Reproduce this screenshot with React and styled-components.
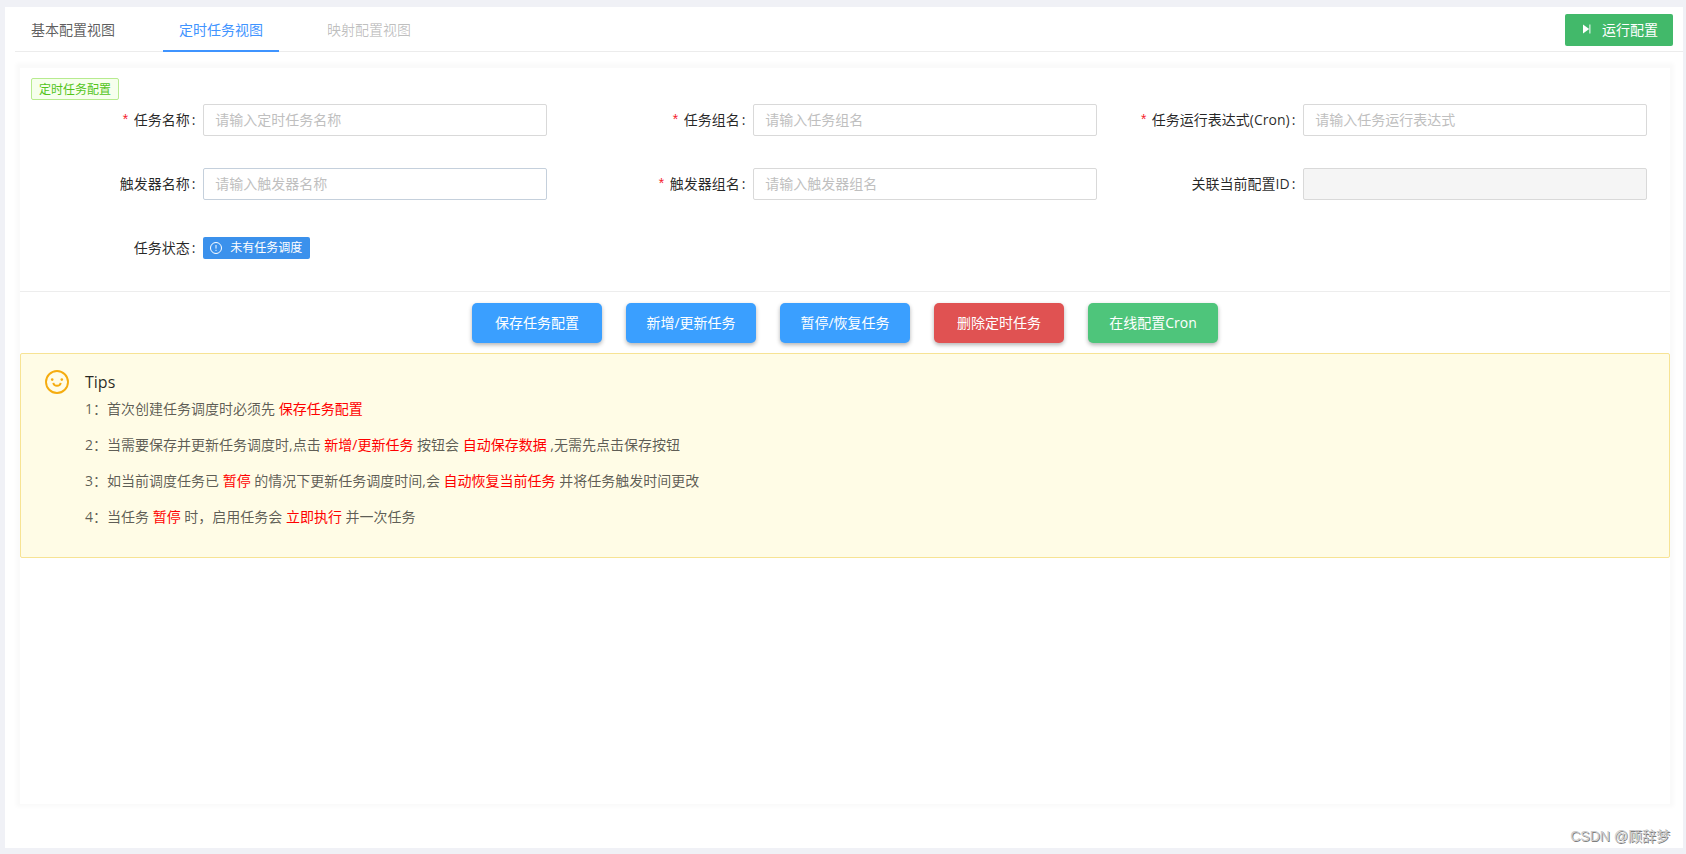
import { useState } from 'react'
import styled, { createGlobalStyle } from 'styled-components'


const GlobalStyle = createGlobalStyle`
  * {
    box-sizing: border-box;
  }
  body {
    margin: 0;
    background: #f0f1f6;
    color: rgba(0, 0, 0, 0.65);
    font-family: 'Open Sans', 'Noto Sans CJK SC', sans-serif;
    font-size: 14px;
    line-height: 22px;
  }
  button, input {
    font-family: inherit;
    font-size: inherit;
  }
`

const Page = styled.div`
  min-height: 100vh;
  padding: 7px 3px 6px 5px;
  display: flex;
`

const Card = styled.main`
  flex: 1;
  min-width: 0;
  padding-left: 10px;
  background: #fff;
  display: flex;
  flex-direction: column;
`

const TabBar = styled.div`
  height: 45px;
  padding-right: 10px;
  border-bottom: 1px solid #ececec;
  display: flex;
  align-items: flex-start;
  justify-content: space-between;
`

const Tabs = styled.nav`
  display: flex;
  gap: 32px;
`

const Tab = styled.button`
  height: 45px;
  padding: 0 16px;
  border: 0;
  border-bottom: 2px solid ${({ $active }) => ($active ? '#3f94ff' : 'transparent')};
  background: none;
  color: ${({ $active }) => ($active ? '#3f94ff' : 'rgba(0, 0, 0, 0.65)')};
  cursor: pointer;
  &:disabled {
    color: rgba(0, 0, 0, 0.25);
    cursor: not-allowed;
  }
`

const RunButton = styled.button`
  height: 32px;
  margin-top: 7px;
  padding: 0 15px 2px;
  border: 0;
  border-radius: 2px;
  background: #42b96a;
  color: #fff;
  display: flex;
  align-items: center;
  gap: 8px;
  cursor: pointer;
`

const Panel = styled.section`
  flex: 1;
  margin: 16px 13px 0 5px;
  background: #fff;
  box-shadow: 0 -1px 4px 4px rgba(0, 0, 0, 0.022);
`

const FormTag = styled.span`
  height: 22px;
  margin: 10px 11px 0;
  padding: 0 7px;
  border: 1px solid #b7eb8f;
  border-radius: 2px;
  background: #f6ffed;
  color: #52c41a;
  font-size: 12px;
  line-height: 22px;
  display: inline-block;
  vertical-align: top;
`

const Form = styled.form`
  padding-bottom: 23px;
  border-bottom: 1px solid #ededed;
  display: grid;
  grid-template-columns: repeat(3, 1fr);
  gap: 24px 0;
`

const Field = styled.div`
  height: 40px;
  display: grid;
  grid-template-columns: 8fr 15fr 1fr;
  align-items: center;
`

const Label = styled.label`
  padding-right: 8px;
  color: rgba(0, 0, 0, 0.85);
  text-align: right;
  white-space: nowrap;
  &::before {
    content: ${({ $required }) => ($required ? "'*'" : 'none')};
    margin-right: 4px;
    color: #f5222d;
    font-family: 'Liberation Mono', monospace;
  }
  &::after {
    content: ':';
    margin-left: 2px;
  }
`

const TextInput = styled.input`
  width: 100%;
  height: 32px;
  padding: 3px 11px 5px;
  border: 1px solid ${({ $tinted }) => ($tinted ? '#c5d0dc' : '#d9d9d9')};
  border-radius: 2px;
  background: #fff;
  color: rgba(0, 0, 0, 0.65);
  outline: none;
  &::placeholder {
    color: #bfbfbf;
  }
  &:disabled {
    background: #f5f5f5;
  }
`

const StatusTag = styled.output`
  height: 22px;
  padding: 0 8px 0 7px;
  border-radius: 2px;
  background: #3b91ec;
  color: #fff;
  font-size: 12px;
  line-height: 24px;
  display: flex;
  align-items: center;
  gap: 8px;
  justify-self: start;
`

const Actions = styled.div`
  padding: 11px 0 10px;
  display: flex;
  justify-content: center;
  gap: 24px;
`

const ActionButton = styled.button`
  width: 130px;
  height: 40px;
  padding: 0 0 2px;
  border: 0;
  border-radius: 5px;
  background: ${({ $color }) => $color};
  box-shadow: 0 2px 4px rgba(0, 0, 0, 0.3);
  color: #fff;
  cursor: pointer;
`

const Alert = styled.div`
  padding: 16px 15px 15px 24px;
  border: 1px solid #f7e394;
  border-radius: 2px;
  background: #fffce6;
  display: flex;
  align-items: flex-start;
  gap: 16px;
`

const AlertTitle = styled.h2`
  margin: 0 0 4px;
  color: rgba(0, 0, 0, 0.85);
  font-size: 16px;
  font-weight: 400;
  line-height: 24px;
`

const Tip = styled.p`
  margin: 0 0 14px;
`

const Mark = styled.span`
  color: #f00;
`

const Watermark = styled.footer`
  height: 44px;
  padding: 21px 13px 0 0;
  color: #ccc;
  font-family: 'Liberation Sans', 'Noto Sans CJK SC', sans-serif;
  font-size: 14px;
  text-align: right;
  text-shadow: 1px 1px 0 rgba(0, 0, 0, 0.5);
`

const NextIcon = () => (
  <svg width="14" height="14" viewBox="0 0 14 14" fill="#fff" aria-hidden="true">
    <path d="M3 2.5 9.2 7 3 11.5z" />
    <path d="M9.2 2.5h1.3v9H9.2z" opacity="0.75" />
  </svg>
)

const InfoIcon = () => (
  <svg width="12" height="12" viewBox="0 0 12 12" fill="none" stroke="#fff" aria-hidden="true">
    <circle cx="6" cy="6" r="5.5" />
    <path d="M6 3v3.6M6 7.8v1.1" />
  </svg>
)

const SmileIcon = () => (
  <svg width="24" height="24" viewBox="0 0 24 24" fill="none" stroke="#f5ac0f" strokeWidth="1.9" aria-hidden="true">
    <circle cx="12" cy="12" r="11" />
    <path d="M8.3 12.8a3.75 3.6 0 0 0 7.4 0" />
    <circle cx="7.2" cy="9.6" r="1.3" fill="#f5ac0f" stroke="none" />
    <circle cx="16.8" cy="9.6" r="1.3" fill="#f5ac0f" stroke="none" />
  </svg>
)

const tabs = [
  { key: 'base', title: '基本配置视图' },
  { key: 'job', title: '定时任务视图' },
  { key: 'mapping', title: '映射配置视图', disabled: true },
]

const fields = [
  { id: 'jobName', label: '任务名称', placeholder: '请输入定时任务名称', required: true },
  { id: 'jobGroup', label: '任务组名', placeholder: '请输入任务组名', required: true },
  { id: 'cron', label: '任务运行表达式(Cron)', placeholder: '请输入任务运行表达式', required: true },
  { id: 'triggerName', label: '触发器名称', placeholder: '请输入触发器名称', tinted: true },
  { id: 'triggerGroup', label: '触发器组名', placeholder: '请输入触发器组名', required: true },
  { id: 'configId', label: '关联当前配置ID', disabled: true },
]

const actions = [
  { title: '保存任务配置', color: '#3a9fff' },
  { title: '新增/更新任务', color: '#3a9fff' },
  { title: '暂停/恢复任务', color: '#3a9fff' },
  { title: '删除定时任务', color: '#e05252' },
  { title: '在线配置Cron', color: '#4ec57b' },
]

export default function App () {
  const [current, setCurrent] = useState('job')

  return (
    <Page>
      <GlobalStyle />
      <Card>
        <TabBar>
          <Tabs>
            {tabs.map(tab => (
              <Tab
                key={tab.key}
                type="button"
                disabled={tab.disabled}
                $active={tab.key === current}
                onClick={() => setCurrent(tab.key)}
              >
                {tab.title}
              </Tab>
            ))}
          </Tabs>
          <RunButton type="button"><NextIcon />运行配置</RunButton>
        </TabBar>
        <Panel>
          <FormTag>定时任务配置</FormTag>
          <Form>
            {fields.map(field => (
              <Field key={field.id}>
                <Label htmlFor={field.id} $required={field.required}>{field.label}</Label>
                <TextInput
                  id={field.id}
                  placeholder={field.placeholder}
                  disabled={field.disabled}
                  $tinted={field.tinted}
                />
              </Field>
            ))}
            <Field>
              <Label htmlFor="status">任务状态</Label>
              <StatusTag id="status"><InfoIcon />未有任务调度</StatusTag>
            </Field>
          </Form>
          <Actions>
            {actions.map(action => (
              <ActionButton key={action.title} type="button" $color={action.color}>
                {action.title}
              </ActionButton>
            ))}
          </Actions>
          <Alert role="note">
            <SmileIcon />
            <div>
              <AlertTitle>Tips</AlertTitle>
              <Tip>1：首次创建任务调度时必须先 <Mark>保存任务配置</Mark></Tip>
              <Tip>2：当需要保存并更新任务调度时,点击 <Mark>新增/更新任务</Mark> 按钮会 <Mark>自动保存数据</Mark> ,无需先点击保存按钮</Tip>
              <Tip>3：如当前调度任务已 <Mark>暂停</Mark> 的情况下更新任务调度时间,会 <Mark>自动恢复当前任务</Mark> 并将任务触发时间更改</Tip>
              <Tip>4：当任务 <Mark>暂停</Mark> 时，启用任务会 <Mark>立即执行</Mark> 并一次任务</Tip>
            </div>
          </Alert>
        </Panel>
        <Watermark>CSDN @顾辞梦</Watermark>
      </Card>
    </Page>
  )
}
